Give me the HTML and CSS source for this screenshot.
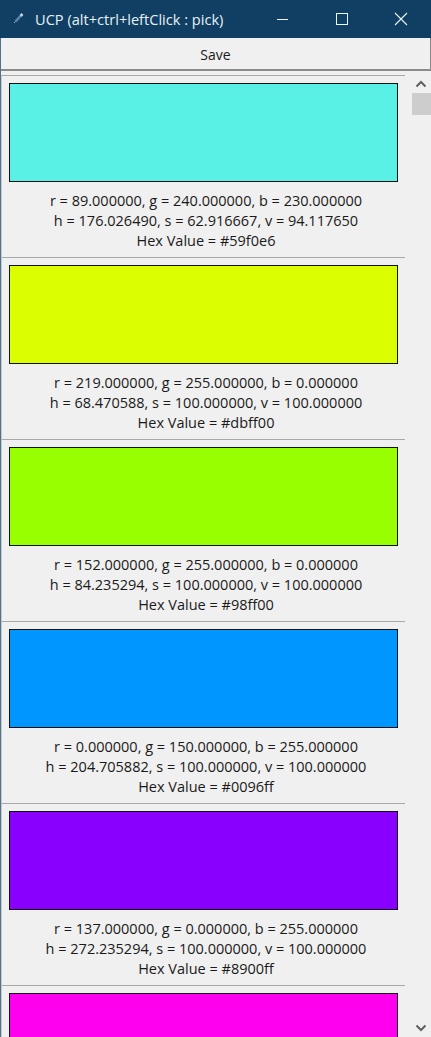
FILE: index.html
```html
<!DOCTYPE html>
<html>
<head>
    <title>UCP</title>
    <link rel="stylesheet" href="styles.css">
</head>
<body>
    <div class="window">
        <div class="titlebar">
            <svg class="app-icon" width="12" height="12" viewBox="0 0 12 12">
                <path d="M2.5 9.5 L7.5 4" stroke="#5f86a8" stroke-width="2.6" fill="none"/>
                <path d="M7.5 4 L9.5 2" stroke="#c4d3df" stroke-width="2.6" fill="none"/>
                <path d="M1 11 L2.5 9.5" stroke="#9db4c8" stroke-width="1" fill="none"/>
            </svg>
            <span class="title">UCP (alt+ctrl+leftClick : pick)</span>
            <div class="controls">
                <div class="control">
                    <svg width="12" height="12" viewBox="0 0 12 12"><path d="M0 6.5 H11" stroke="#e8f4f8" stroke-width="1"/></svg>
                </div>
                <div class="control">
                    <svg width="12" height="12" viewBox="0 0 12 12"><rect x="0.5" y="0.5" width="11" height="11" stroke="#e8f8f8" fill="none"/></svg>
                </div>
                <div class="control">
                    <svg width="14" height="14" viewBox="0 0 14 14"><path d="M1 1 L13 13 M13 1 L1 13" stroke="#e8f8f8" stroke-width="1.1" fill="none"/></svg>
                </div>
            </div>
        </div>

        <div class="savebar">Save</div>

        <div class="content">
            <div class="list">
                <div class="card">
                    <div class="swatch" style="background-color: #59f0e6"></div>
                    <div class="info">r = 89.000000, g = 240.000000, b = 230.000000</div>
                    <div class="info">h = 176.026490, s = 62.916667, v = 94.117650</div>
                    <div class="info">Hex Value = #59f0e6</div>
                </div>
                <div class="card">
                    <div class="swatch" style="background-color: #dbff00"></div>
                    <div class="info">r = 219.000000, g = 255.000000, b = 0.000000</div>
                    <div class="info">h = 68.470588, s = 100.000000, v = 100.000000</div>
                    <div class="info">Hex Value = #dbff00</div>
                </div>
                <div class="card">
                    <div class="swatch" style="background-color: #98ff00"></div>
                    <div class="info">r = 152.000000, g = 255.000000, b = 0.000000</div>
                    <div class="info">h = 84.235294, s = 100.000000, v = 100.000000</div>
                    <div class="info">Hex Value = #98ff00</div>
                </div>
                <div class="card">
                    <div class="swatch" style="background-color: #0096ff"></div>
                    <div class="info">r = 0.000000, g = 150.000000, b = 255.000000</div>
                    <div class="info">h = 204.705882, s = 100.000000, v = 100.000000</div>
                    <div class="info">Hex Value = #0096ff</div>
                </div>
                <div class="card">
                    <div class="swatch" style="background-color: #8900ff"></div>
                    <div class="info">r = 137.000000, g = 0.000000, b = 255.000000</div>
                    <div class="info">h = 272.235294, s = 100.000000, v = 100.000000</div>
                    <div class="info">Hex Value = #8900ff</div>
                </div>
                <div class="card">
                    <div class="swatch" style="background-color: #ff00ee"></div>
                </div>
            </div>

            <div class="scrollbar">
                <svg class="arrow" width="12" height="8" viewBox="0 0 12 8"><path d="M1.5 6.5 L6 2 L10.5 6.5" stroke="#606060" stroke-width="2" fill="none"/></svg>
                <div class="thumb"></div>
                <svg class="arrow arrow-down" width="12" height="8" viewBox="0 0 12 8"><path d="M1.5 1.5 L6 6 L10.5 1.5" stroke="#606060" stroke-width="2" fill="none"/></svg>
            </div>
        </div>
    </div>
</body>
</html>
```

FILE: styles.css
```css
html, body {
    margin: 0;
    padding: 0;
    height: 100%;
    overflow: hidden;
}

body {
    font-family: "Open Sans", "Noto Sans", sans-serif;
    font-size: 14.5px;
    color: #1a1a1a;
    background-color: #f0f0f0;
}

.window {
    display: flex;
    flex-direction: column;
    height: 1037px;
    border-left: 1px solid #4d7590;
    box-sizing: border-box;
}

.titlebar {
    display: flex;
    align-items: center;
    height: 38px;
    flex-shrink: 0;
    margin-left: -1px;
    background-color: #113f63;
    color: #e6f2f6;
}

.app-icon {
    margin-left: 13px;
    margin-bottom: 2px;
}

.title {
    margin-left: 10px;
    margin-bottom: 1px;
    font-size: 14.6px;
}

.controls {
    display: flex;
    margin-left: auto;
    margin-right: 1px;
}

.control {
    display: flex;
    align-items: center;
    justify-content: center;
    width: 59px;
    height: 38px;
}

.savebar {
    height: 33px;
    flex-shrink: 0;
    line-height: 33px;
    text-align: center;
    box-sizing: border-box;
    border-bottom: 2px solid #8a8a8a;
    border-right: 1px solid #8a8a8a;
    font-size: 14px;
}

.content {
    display: flex;
    flex: 1;
    min-height: 0;
    padding-top: 4px;
}

.list {
    flex: 1;
    min-width: 0;
    overflow: hidden;
    margin-right: 6px;
}

.card {
    height: 182px;
    box-sizing: border-box;
    padding: 7px 7px 0 7px;
    border-top: 1px solid #a8a8a8;
    border-left: 1px solid #c8c8c8;
    text-align: center;
}

.swatch {
    height: 99px;
    box-sizing: border-box;
    border: 1px solid #101010;
    margin-bottom: 9px;
}

.info {
    height: 20px;
    line-height: 20px;
    white-space: nowrap;
    margin-right: -5px;
}

.scrollbar {
    display: flex;
    flex-direction: column;
    align-items: center;
    width: 20px;
    flex-shrink: 0;
    margin-top: -4px;
    background-color: #f0f0f0;
}

.arrow {
    margin-top: 9px;
    flex-shrink: 0;
}

.thumb {
    width: 19px;
    height: 22px;
    margin-top: 5px;
    background-color: #cdcdcd;
}

.arrow-down {
    margin-top: auto;
    margin-bottom: 5px;
}
```
